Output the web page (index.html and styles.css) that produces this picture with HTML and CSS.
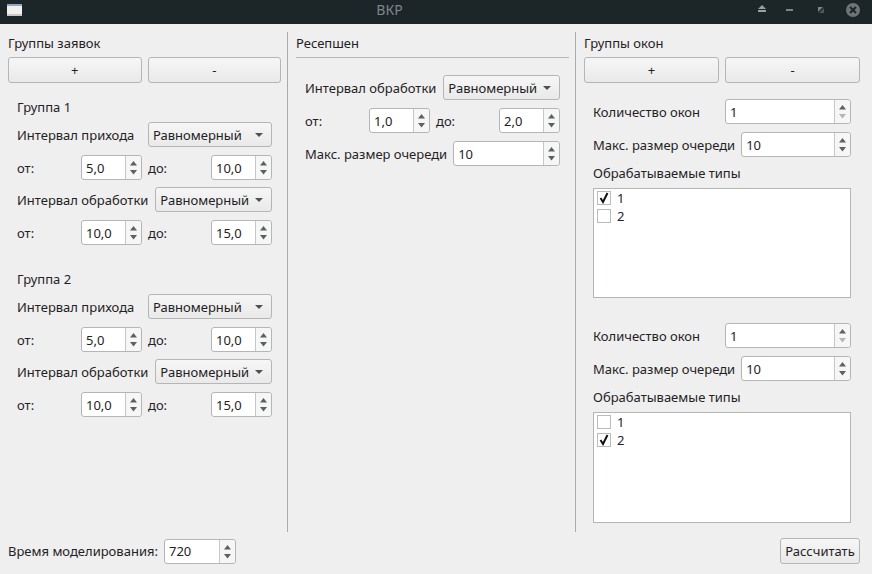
FILE: index.html
```html
<!DOCTYPE html>
<html lang="ru">
<head>
    <meta charset="UTF-8">
    <title>ВКР</title>
    <link rel="stylesheet" href="styles.css">
</head>
<body>
    <svg class="defs" width="0" height="0">
        <symbol id="spinArrows" viewBox="0 0 15 23">
            <path d="M4 9.5 L7.5 5 L11 9.5 Z" fill="#5b6063"/>
            <path d="M4 14 L11 14 L7.5 18.5 Z" fill="#5b6063"/>
        </symbol>
        <symbol id="spinArrowsOff" viewBox="0 0 15 23">
            <path d="M4 9.5 L7.5 5 L11 9.5 Z" fill="#5b6063"/>
            <path d="M4 14 L11 14 L7.5 18.5 Z" fill="#b4b6b7"/>
        </symbol>
    </svg>

    <div class="titlebar">
        <svg class="appIcon" width="15" height="12" viewBox="0 0 15 12">
            <rect width="15" height="12" fill="#f4f4f4"/>
            <rect width="15" height="2" fill="#8fa6c4"/>
            <rect y="2" width="15" height="10" fill="#f1f0ee"/>
            <rect y="10" width="15" height="2" fill="#c9c9c9"/>
        </svg>
        <div class="windowTitle">ВКР</div>
        <svg class="winBtns" width="112" height="24" viewBox="0 0 112 24">
            <path d="M1 9 L5 5 L9 9 Z M1 10 H9 V12 H1 Z" fill="#9aa0a2"/>
            <rect x="29" y="9" width="7" height="2" fill="#7c8386"/>
            <path d="M61 7 L66 7 L61 12 Z" fill="#7c8386"/>
            <path d="M67 8 L67 13 L62 13 Z" fill="#4f5659"/>
            <circle cx="96" cy="10" r="7" fill="#6e7578"/>
            <path d="M93 7 L99 13 M99 7 L93 13" stroke="#1c2528" stroke-width="2"/>
        </svg>
    </div>

    <div class="window">
        <div class="columns">
            <div class="col colLeft">
                <div class="heading">Группы заявок</div>
                <div class="btnRow">
                    <button class="btn">+</button>
                    <button class="btn">-</button>
                </div>

                <div class="group">
                    <div class="groupName">Группа 1</div>
                    <div class="row">
                        <span class="lbl">Интервал прихода</span>
                        <div class="combo comboWide">Равномерный<span class="caret"></span></div>
                    </div>
                    <div class="row rangeRow">
                        <span class="lbl rangeLbl">от:</span>
                        <div class="spin spinSmall"><span class="val">5,0</span><svg class="arrows"><use href="#spinArrows"/></svg></div>
                        <span class="lbl toLbl">до:</span>
                        <div class="spin spinSmall"><span class="val">10,0</span><svg class="arrows"><use href="#spinArrows"/></svg></div>
                    </div>
                    <div class="row">
                        <span class="lbl">Интервал обработки</span>
                        <div class="combo">Равномерный<span class="caret"></span></div>
                    </div>
                    <div class="row rangeRow">
                        <span class="lbl rangeLbl">от:</span>
                        <div class="spin spinSmall"><span class="val">10,0</span><svg class="arrows"><use href="#spinArrows"/></svg></div>
                        <span class="lbl toLbl">до:</span>
                        <div class="spin spinSmall"><span class="val">15,0</span><svg class="arrows"><use href="#spinArrows"/></svg></div>
                    </div>
                </div>

                <div class="group groupNext">
                    <div class="groupName">Группа 2</div>
                    <div class="row">
                        <span class="lbl">Интервал прихода</span>
                        <div class="combo comboWide">Равномерный<span class="caret"></span></div>
                    </div>
                    <div class="row rangeRow">
                        <span class="lbl rangeLbl">от:</span>
                        <div class="spin spinSmall"><span class="val">5,0</span><svg class="arrows"><use href="#spinArrows"/></svg></div>
                        <span class="lbl toLbl">до:</span>
                        <div class="spin spinSmall"><span class="val">10,0</span><svg class="arrows"><use href="#spinArrows"/></svg></div>
                    </div>
                    <div class="row">
                        <span class="lbl">Интервал обработки</span>
                        <div class="combo">Равномерный<span class="caret"></span></div>
                    </div>
                    <div class="row rangeRow">
                        <span class="lbl rangeLbl">от:</span>
                        <div class="spin spinSmall"><span class="val">10,0</span><svg class="arrows"><use href="#spinArrows"/></svg></div>
                        <span class="lbl toLbl">до:</span>
                        <div class="spin spinSmall"><span class="val">15,0</span><svg class="arrows"><use href="#spinArrows"/></svg></div>
                    </div>
                </div>
            </div>

            <div class="vline"></div>

            <div class="col colMiddle">
                <div class="heading">Ресепшен</div>
                <div class="hline"></div>
                <div class="group reception">
                    <div class="row">
                        <span class="lbl">Интервал обработки</span>
                        <div class="combo">Равномерный<span class="caret"></span></div>
                    </div>
                    <div class="row rangeRow">
                        <span class="lbl rangeLbl">от:</span>
                        <div class="spin spinSmall"><span class="val">1,0</span><svg class="arrows"><use href="#spinArrows"/></svg></div>
                        <span class="lbl toLbl">до:</span>
                        <div class="spin spinSmall"><span class="val">2,0</span><svg class="arrows"><use href="#spinArrows"/></svg></div>
                    </div>
                    <div class="row">
                        <span class="lbl maxLbl">Макс. размер очереди</span>
                        <div class="spin spinFill"><span class="val">10</span><svg class="arrows"><use href="#spinArrows"/></svg></div>
                    </div>
                </div>
            </div>

            <div class="vline"></div>

            <div class="col colRight">
                <div class="heading">Группы окон</div>
                <div class="btnRow">
                    <button class="btn">+</button>
                    <button class="btn">-</button>
                </div>

                <div class="group windowGroup">
                    <div class="row">
                        <span class="lbl countLbl">Количество окон</span>
                        <div class="spin spinFill"><span class="val">1</span><svg class="arrows"><use href="#spinArrowsOff"/></svg></div>
                    </div>
                    <div class="row">
                        <span class="lbl maxLbl">Макс. размер очереди</span>
                        <div class="spin spinFill"><span class="val">10</span><svg class="arrows"><use href="#spinArrows"/></svg></div>
                    </div>
                    <div class="typesLbl">Обрабатываемые типы</div>
                    <div class="typeList">
                        <div class="typeItem"><span class="check"><svg width="12" height="12" viewBox="0 0 12 12"><path d="M2.5 6 L5 10 L9.5 1" fill="none" stroke="#111" stroke-width="2"/></svg></span>1</div>
                        <div class="typeItem"><span class="check"></span>2</div>
                    </div>
                </div>

                <div class="group windowGroup groupSecond">
                    <div class="row">
                        <span class="lbl countLbl">Количество окон</span>
                        <div class="spin spinFill"><span class="val">1</span><svg class="arrows"><use href="#spinArrowsOff"/></svg></div>
                    </div>
                    <div class="row">
                        <span class="lbl maxLbl">Макс. размер очереди</span>
                        <div class="spin spinFill"><span class="val">10</span><svg class="arrows"><use href="#spinArrows"/></svg></div>
                    </div>
                    <div class="typesLbl">Обрабатываемые типы</div>
                    <div class="typeList">
                        <div class="typeItem"><span class="check"></span>1</div>
                        <div class="typeItem"><span class="check"><svg width="12" height="12" viewBox="0 0 12 12"><path d="M2.5 6 L5 10 L9.5 1" fill="none" stroke="#111" stroke-width="2"/></svg></span>2</div>
                    </div>
                </div>
            </div>
        </div>

        <div class="footer">
            <span class="lbl">Время моделирования:</span>
            <div class="spin spinTime"><span class="val">720</span><svg class="arrows"><use href="#spinArrows"/></svg></div>
            <button class="btn calcBtn">Рассчитать</button>
        </div>
    </div>
</body>
</html>
```

FILE: styles.css
```css
html, body {
    margin: 0;
    padding: 0;
    height: 100%;
}

body {
    display: flex;
    flex-direction: column;
    background-color: #efefef;
    color: #1f2225;
    font-family: "Noto Sans", sans-serif;
    font-size: 13px;
    overflow: hidden;
}

.defs {
    display: none;
}

.titlebar {
    flex: none;
    display: flex;
    align-items: center;
    height: 24px;
    padding-left: 7px;
    background-color: #1c2528;
}

.appIcon {
    flex: none;
    margin-bottom: 4px;
}

.windowTitle {
    flex: 1;
    text-align: center;
    color: #7f8688;
    font-size: 14px;
    margin-bottom: 6px;
}

.winBtns {
    flex: none;
    margin-right: 3px;
}

.window {
    flex: 1;
    display: flex;
    flex-direction: column;
    padding: 8px 12px 10px 8px;
    min-height: 0;
}

.columns {
    flex: 1;
    display: flex;
    min-height: 0;
}

.col {
    display: flex;
    flex-direction: column;
}

.colLeft {
    width: 273px;
}

.colMiddle {
    width: 273px;
}

.colRight {
    width: 276px;
}

.vline {
    width: 1px;
    margin: 0 8px 0 6px;
    background-color: #a9abac;
}

.heading {
    height: 25px;
    line-height: 22px;
    flex: none;
}

.hline {
    height: 1px;
    background-color: #b4b6b7;
}

.btnRow {
    display: flex;
    gap: 6px;
}

.btn {
    flex: 1;
    height: 26px;
    padding: 0;
    background: linear-gradient(#f6f6f6, #e9e9e9);
    border: 1px solid #b3b5b6;
    border-radius: 3px;
    color: #1f2225;
    font: inherit;
}

.group {
    display: flex;
    flex-direction: column;
    gap: 7px;
    padding: 0 9px;
}

.colLeft .group {
    margin-top: 15px;
}

.colLeft .groupNext {
    margin-top: 25px;
}

.groupName {
    height: 18px;
    line-height: 18px;
    margin-bottom: -1px;
}

.row {
    display: flex;
    align-items: center;
    height: 25px;
    margin-bottom: 1px;
}

.colLeft .rangeRow {
    margin-bottom: 0;
}

.lbl {
    flex: none;
    white-space: nowrap;
}

.row .lbl {
    margin-right: 7px;
}

.row .maxLbl {
    margin-right: 6px;
}

.rangeLbl {
    width: 57px;
}

.row .toLbl {
    width: 56px;
    margin-left: 6px;
    margin-right: 7px;
}

.combo {
    flex: 1;
    display: flex;
    align-items: center;
    justify-content: space-between;
    box-sizing: border-box;
    height: 25px;
    padding: 0 6px 0 4px;
    background: linear-gradient(#f6f6f6, #e9e9e9);
    border: 1px solid #b3b5b6;
    border-radius: 3px;
}

.comboWide {
    flex: none;
    width: 124px;
    margin-left: auto;
}

.caret {
    width: 0;
    height: 0;
    margin-right: 2px;
    border-left: 4px solid transparent;
    border-right: 4px solid transparent;
    border-top: 4px solid #4d5154;
}

.spin {
    flex: none;
    position: relative;
    display: flex;
    align-items: center;
    box-sizing: border-box;
    height: 25px;
    padding-left: 4px;
    background-color: #fff;
    border: 1px solid #b3b5b6;
    border-radius: 3px;
}

.spinSmall {
    width: 61px;
}

.spinFill {
    flex: 1;
}

.spinTime {
    width: 72px;
}

.val {
    flex: 1;
}

.arrows {
    flex: none;
    width: 15px;
    height: 23px;
    background-color: #f6f6f6;
    border-left: 1px solid #c6c7c8;
    border-radius: 0 3px 3px 0;
}

.reception {
    margin-top: 17px;
}

.windowGroup {
    margin-top: 16px;
}

.windowGroup.groupSecond {
    margin-top: 25px;
}

.colRight .row {
    margin-bottom: 1px;
}

.typesLbl {
    height: 18px;
    line-height: 18px;
    margin-top: -1px;
}

.countLbl {
    width: 125px;
}

.typeList {
    box-sizing: border-box;
    height: 110px;
    margin-top: -1px;
    padding: 0 3px;
    background-color: #fff;
    border: 1px solid #b3b5b6;
}

.groupSecond .typeList {
    height: 111px;
}

.typeItem {
    display: flex;
    align-items: center;
    gap: 6px;
    height: 18px;
}

.check {
    flex: none;
    display: flex;
    box-sizing: border-box;
    width: 14px;
    height: 14px;
    background-color: #fff;
    border: 1px solid #b9bbbc;
}

.check svg {
    flex: none;
}

.footer {
    flex: none;
    display: flex;
    align-items: center;
    height: 26px;
    margin-top: 6px;
}

.footer .lbl {
    margin-right: 6px;
}

.calcBtn {
    flex: none;
    width: 80px;
    margin-left: auto;
}
```
